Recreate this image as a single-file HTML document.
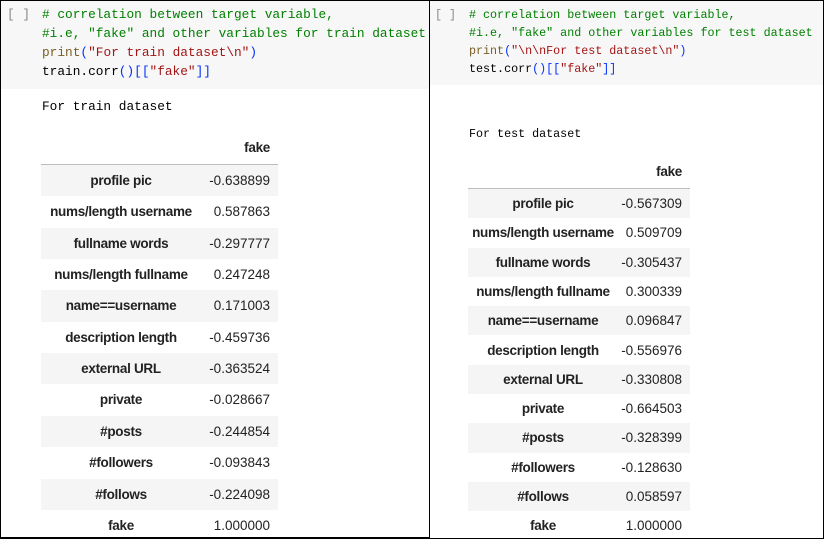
<!DOCTYPE html>
<html><head><meta charset="utf-8"><style>
*{margin:0;padding:0;box-sizing:border-box}
body{width:824px;height:539px;position:relative;background:#fff;overflow:hidden;font-family:"Liberation Sans",sans-serif}
.frame{position:absolute;left:0;top:0;width:824px;height:539px;border:1px solid #000;z-index:5;pointer-events:none}
.vl{position:absolute;left:429px;top:0;width:1px;height:539px;background:#000;z-index:5}
.bl{position:absolute;left:0;top:537px;width:430px;height:2px;background:#000;z-index:5}
.code{position:absolute;background:#f7f7f7}
.mono{font-family:"Liberation Mono","DejaVu Sans Mono",monospace;font-size:12.8px;line-height:19px;white-space:pre;position:absolute}
.r{font-size:11.7px;line-height:18px}
.br{color:#888}
.c{color:#008000}.s{color:#a31515}.p{color:#795e26}.b{color:#0431fa}.k{color:#000}
.row{position:absolute;height:31px}
.g{background:#f5f5f5}
.lab{position:absolute;top:0;font-weight:bold;font-size:13.5px;letter-spacing:-0.3px;color:#222;text-align:center;white-space:nowrap}
.val{position:absolute;top:0;font-size:13.5px;color:#222;text-align:right;white-space:nowrap}
</style></head><body>
<div class="frame"></div><div class="vl"></div><div class="bl"></div>

<div class="code" style="left:0;top:0;width:429px;height:89px"></div>
<div class="mono br" style="left:7px;top:5px">[ ]</div>
<div class="mono" style="left:42px;top:5px"><span class="c"># correlation between target variable,</span>
<span class="c">#i.e, "fake" and other variables for train dataset</span>
<span class="p">print</span><span class="b">(</span><span class="s">"For train dataset\n"</span><span class="b">)</span>
<span class="k">train.corr</span><span class="b">()[[</span><span class="s">"fake"</span><span class="b">]]</span></div>
<div class="mono k" style="left:42px;top:97px">For train dataset</div>

<div class="code" style="left:430px;top:0;width:394px;height:85px"></div>
<div class="mono r br" style="left:435px;top:6px">[ ]</div>
<div class="mono r" style="left:469px;top:6px"><span class="c"># correlation between target variable,</span>
<span class="c">#i.e, "fake" and other variables for test dataset</span>
<span class="p">print</span><span class="b">(</span><span class="s">"\n\nFor test dataset\n"</span><span class="b">)</span>
<span class="k">test.corr</span><span class="b">()[[</span><span class="s">"fake"</span><span class="b">]]</span></div>
<div class="mono r k" style="left:469px;top:125px">For test dataset</div>

<div id="L"></div><div id="R"></div>
<script>
var labels=["profile pic","nums/length username","fullname words","nums/length fullname","name==username","description length","external URL","private","#posts","#followers","#follows","fake"];
var lv=["-0.638899","0.587863","-0.297777","0.247248","0.171003","-0.459736","-0.363524","-0.028667","-0.244854","-0.093843","-0.224098","1.000000"];
var rv=["-0.567309","0.509709","-0.305437","0.300339","0.096847","-0.556976","-0.330808","-0.664503","-0.328399","-0.128630","0.058597","1.000000"];
function tbl(id,x,w,top,h,lw,vals,hy){
 var s='<div class="lab" style="left:'+(x)+'px;top:'+hy+'px;width:'+(w-8)+'px;text-align:right;position:absolute;line-height:16px">fake</div>';
 s+='<div style="position:absolute;left:'+x+'px;top:'+(top-1)+'px;width:'+w+'px;height:1px;background:#bdbdbd"></div>';
 for(var i=0;i<12;i++){
  var y=top+i*h;
  s+='<div class="row'+(i%2==0?' g':'')+'" style="left:'+x+'px;top:'+y+'px;width:'+w+'px;height:'+h+'px;line-height:'+h+'px">'+
  '<div class="lab" style="left:0;width:'+lw+'px">'+labels[i]+'</div>'+
  '<div class="val" style="right:8px">'+vals[i]+'</div></div>';
 }
 document.getElementById(id).innerHTML=s;
}
tbl("L",41,237,165,31.35,160,lv,140);
tbl("R",468,222,189,29.3,150,rv,164);
</script>
</body></html>
